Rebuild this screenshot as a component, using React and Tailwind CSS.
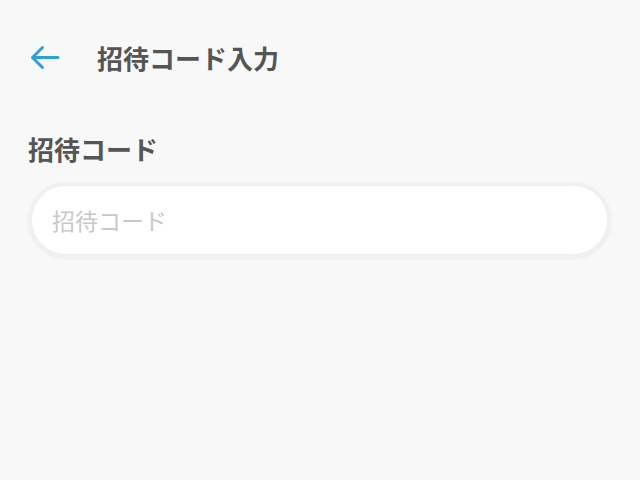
import React from "react";

const App = () => {
  return (
    <div
      className="w-[640px] h-[480px] bg-[#f8f8f8] text-[#555555]"
      style={{ fontFamily: '"Noto Sans CJK JP", "Noto Sans", sans-serif' }}
    >
      <header className="flex items-center h-[116px] pl-[30px]">
        <button className="flex items-center justify-center w-[30px] h-[30px]">
          <svg width="30" height="26" viewBox="0 0 30 26" fill="none">
            <path
              d="M2.5 12.5 H28 M12.5 2.5 L2.5 12.5 L12.5 22.5"
              stroke="#2ea0d6"
              strokeWidth="3"
              strokeLinecap="round"
              strokeLinejoin="round"
            />
          </svg>
        </button>
        <h1 className="ml-[37px] text-[26px] font-bold leading-none">招待コード入力</h1>
      </header>

      <main className="px-[28px] pt-[20px]">
        <label className="block text-[26px] font-bold leading-none">招待コード</label>
        <div className="mt-[20px] h-[76px] w-[583px] rounded-full border-[4px] border-[#f0f0f0] bg-white shadow-[0_1px_3px_rgba(0,0,0,0.05)] flex items-center px-[20px]">
          <input
            className="w-full bg-transparent outline-none text-[23px] text-[#555555] placeholder:text-[#c8c8c8]"
            placeholder="招待コード"
          />
        </div>
      </main>
    </div>
  );
};

export default App;
